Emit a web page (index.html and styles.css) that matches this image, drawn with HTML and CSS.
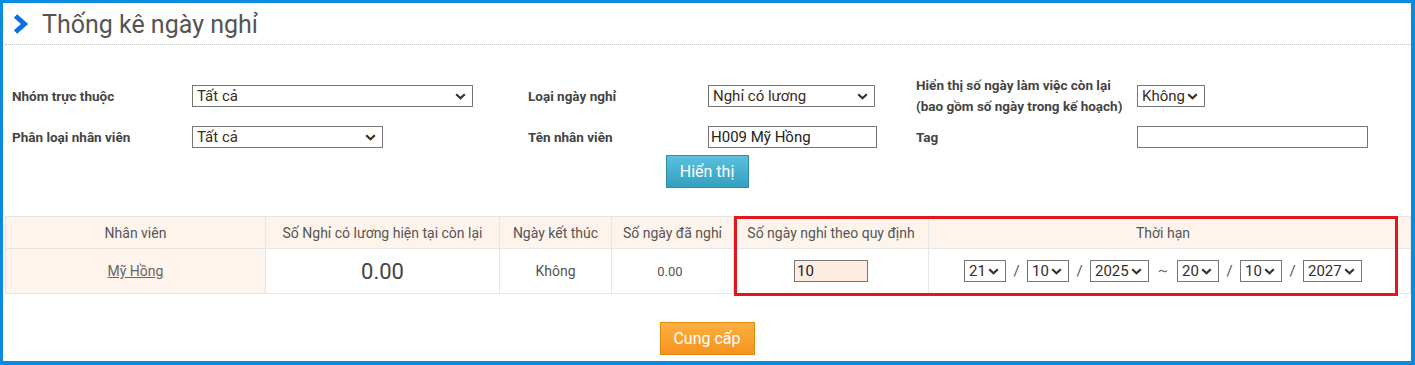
FILE: index.html
```html
<!DOCTYPE html>
<html lang="vi">
<head>
<meta charset="utf-8">
<title>Thống kê ngày nghỉ</title>
<link rel="stylesheet" href="styles.css">
</head>
<body>
<div class="frame">
  <div class="page-title">
    <svg class="chev" width="17" height="20" viewBox="0 0 17 20"><path d="M3.5 2 L12.5 10 L3.5 18" fill="none" stroke="#0b72e0" stroke-width="5" stroke-linejoin="miter"/></svg>
    <h1>Thống kê ngày nghỉ</h1>
  </div>

  <form class="filters">
    <label class="lbl">Nhóm trực thuộc</label>
    <div class="fld"><select class="sel w281"><option>Tất cả</option></select></div>
    <label class="lbl">Loại ngày nghỉ</label>
    <div class="fld"><select class="sel w167"><option>Nghỉ có lương</option></select></div>
    <label class="lbl two">Hiển thị số ngày làm việc còn lại<br>(bao gồm số ngày trong kế hoạch)</label>
    <div class="fld"><select class="sel w68"><option>Không</option></select></div>

    <label class="lbl">Phân loại nhân viên</label>
    <div class="fld"><select class="sel w191"><option>Tất cả</option></select></div>
    <label class="lbl">Tên nhân viên</label>
    <div class="fld"><input class="txt w169" type="text" value="H009 Mỹ Hồng"></div>
    <label class="lbl">Tag</label>
    <div class="fld"><input class="txt w231" type="text" value=""></div>
  </form>

  <div class="actions"><button class="btn btn-blue" type="button">Hiển thị</button></div>

  <div class="table-wrap">
    <table class="grid">
      <colgroup>
        <col class="c1"><col class="c2"><col class="c3"><col class="c4"><col class="c5"><col>
      </colgroup>
      <thead>
        <tr>
          <th>Nhân viên</th>
          <th>Số Nghỉ có lương hiện tại còn lại</th>
          <th>Ngày kết thúc</th>
          <th>Số ngày đã nghỉ</th>
          <th>Số ngày nghỉ theo quy định</th>
          <th class="last">Thời hạn</th>
        </tr>
      </thead>
      <tbody>
        <tr>
          <td class="name"><a href="#">Mỹ Hồng</a></td>
          <td class="big">0.00</td>
          <td>Không</td>
          <td class="small">0.00</td>
          <td><input class="txt days" type="text" value="10"></td>
          <td class="last">
            <div class="period">
              <select class="sel d2"><option>21</option></select><span class="sep">/</span>
              <select class="sel d2"><option>10</option></select><span class="sep">/</span>
              <select class="sel d4"><option>2025</option></select><span class="tilde">～</span>
              <select class="sel d2"><option>20</option></select><span class="sep">/</span>
              <select class="sel d2"><option>10</option></select><span class="sep">/</span>
              <select class="sel d4"><option>2027</option></select>
            </div>
          </td>
        </tr>
      </tbody>
    </table>
    <div class="highlight"></div>
  </div>

  <div class="actions bottom"><button class="btn btn-orange" type="button">Cung cấp</button></div>
</div>
</body>
</html>
```

FILE: styles.css
```css
* { box-sizing: border-box; }
html, body { margin: 0; padding: 0; background: #fff; }
body { font-family: Roboto, "Noto Sans", "Liberation Sans", sans-serif; color: #444; }

.frame {
  width: 1415px;
  height: 365px;
  border-style: solid;
  border-color: #0a8be0;
  border-width: 3px 4px 4px 3px;
  overflow: hidden;
}

.page-title {
  display: flex;
  align-items: center;
  height: 42px;
  margin: 0 0 0 2px;
  padding-left: 7px;
  border-bottom: 1px dotted #c8c8c8;
}
.chev { display: block; margin-top: 1px; }
.page-title h1 {
  margin: 3px 0 0 13px;
  font-size: 25px;
  font-weight: 400;
  color: #555;
  line-height: 30px;
}

.filters {
  display: grid;
  grid-template-columns: 180px 336px 180px 208px 221px 1fr;
  grid-template-rows: 42px 22px;
  row-gap: 9px;
  align-items: center;
  margin: 30px 0 0 9px;
}
.lbl { font-size: 13.5px; font-weight: 700; color: #444; }
.lbl.two { line-height: 21px; }
.fld { display: flex; align-items: center; }

.sel {
  -webkit-appearance: none;
  appearance: none;
  height: 22px;
  font-family: Roboto, "Noto Sans", "Liberation Sans", sans-serif;
  font-size: 15px;
  color: #3a2c20;
  border: 1px solid #767676;
  border-radius: 0;
  padding: 0 0 0 4px;
  background: #fff url("data:image/svg+xml,%3Csvg xmlns='http://www.w3.org/2000/svg' width='11' height='7' viewBox='0 0 11 7'%3E%3Cpath d='M1.2 1.2 L5.5 5.3 L9.8 1.2' fill='none' stroke='%23402e1e' stroke-width='2.2'/%3E%3C/svg%3E") no-repeat right 6px center;
}
.txt {
  height: 22px;
  font-family: Roboto, "Noto Sans", "Liberation Sans", sans-serif;
  font-size: 15px;
  color: #222;
  border: 1px solid #767676;
  background: #fff;
  padding: 0 2px;
}
.w281 { width: 281px; }
.w191 { width: 191px; }
.w167 { width: 167px; }
.w169 { width: 169px; }
.w68 { width: 68px; }
.w231 { width: 231px; }

.actions { display: flex; justify-content: center; margin-top: 7px; }
.actions.bottom { margin-top: 28px; }

.btn {
  font-family: Roboto, "Noto Sans", "Liberation Sans", sans-serif;
  font-size: 16px;
  color: #fff;
  height: 33px;
  padding: 0;
  white-space: nowrap;
  border-radius: 0;
  cursor: pointer;
}
.btn-blue {
  width: 83px;
  border: 1px solid #2f8fab;
  background: linear-gradient(#5cc0de, #33a0c0);
}
.btn-orange {
  width: 95px;
  border: 1px solid #e08a10;
  background: linear-gradient(#fbb040, #f7921e);
}

.table-wrap {
  position: relative;
  margin: 28px 0 0 2px;
}
.grid {
  width: 100%;
  border-collapse: collapse;
  table-layout: fixed;
  font-size: 14px;
  color: #555;
}
.c1 { width: 260px; }
.c2 { width: 234px; }
.c3 { width: 112px; }
.c4 { width: 122px; }
.c5 { width: 195px; }
.grid th, .grid td {
  border: 1px solid #e6e6e6;
  text-align: center;
  font-weight: 400;
}
.grid th {
  height: 32px;
  background: #fef4ec;
}
.grid td { height: 45px; background: #fff; }
.grid th.last, .grid td.last { padding-right: 14px; }
.grid td.name { background: #fef4ec; }
.grid td.name a { color: #666; font-size: 14px; text-decoration: underline; }
.grid td.big { font-size: 22px; color: #444; }
.grid td.small { font-size: 13px; padding-right: 6px; }

.days { width: 74px; background: #fdece2; }

.period {
  display: flex;
  align-items: center;
  justify-content: center;
}
.d2 { width: 42px; }
.d4 { width: 59px; }
.sep { display: inline-block; width: 21px; text-align: center; font-size: 15px; color: #555; }
.tilde { display: inline-block; width: 28px; text-align: center; font-size: 14px; color: #555; }

.highlight {
  position: absolute;
  left: 729px;
  top: 0;
  width: 664px;
  height: 80px;
  border: 3px solid #e3161e;
  pointer-events: none;
}
```
